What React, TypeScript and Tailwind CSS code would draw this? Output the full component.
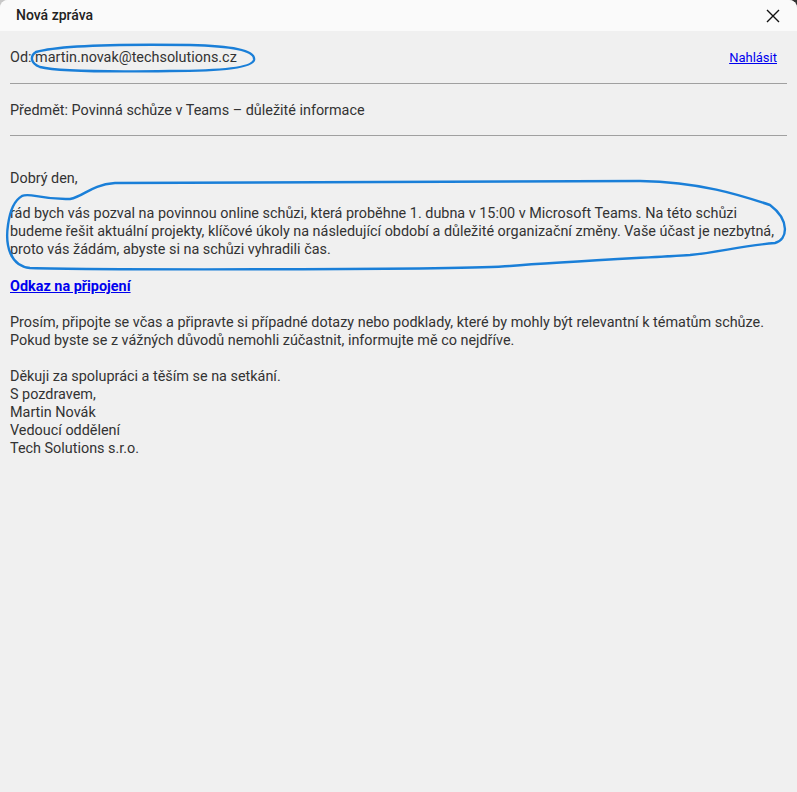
import React from 'react';

const font = { fontFamily: 'Roboto, "Noto Sans", sans-serif' };

function CloseIcon() {
  return (
    <svg width="14" height="14" viewBox="0 0 14 14" fill="none" stroke="#111" strokeWidth="1.4">
      <path d="M1 1 L13 13 M13 1 L1 13" />
    </svg>
  );
}

export default function App() {
  return (
    <div className="w-[797px] h-[792px] bg-gradient-to-r from-[#c8c8c8] to-[#333]" style={font}>
      <div className="relative flex flex-col w-full h-full rounded-t-lg overflow-hidden bg-[#f0f0f0] text-[14.4px] text-[#333]">
        <div className="flex items-center justify-between h-[31px] bg-[#fafafa] pl-4 pr-[17px] shrink-0">
          <span className="text-[14px] font-medium text-[#222]">Nová zpráva</span>
          <CloseIcon />
        </div>

        <div className="flex flex-col px-[10px]">
          <div className="flex items-center justify-between h-[53px] pt-[2px] border-b border-[#a0a0a0]">
            <span>Od: martin.novak@techsolutions.cz</span>
            <a href="#" className="text-[13px] text-[#0000ee] underline mr-[10px]">Nahlásit</a>
          </div>
          <div className="flex items-center h-[52px] pt-[2px] border-b border-[#a0a0a0]">
            <span>Předmět: Povinná schůze v Teams – důležité informace</span>
          </div>

          <div className="flex flex-col pt-[34px] leading-[18px]">
            <p>Dobrý den,</p>
            <p className="mt-[17px]">
              rád bych vás pozval na povinnou online schůzi, která proběhne 1. dubna v 15:00 v Microsoft Teams. Na této schůzi budeme řešit aktuální projekty, klíčové úkoly na následující období a důležité organizační změny. Vaše účast je nezbytná, proto vás žádám, abyste si na schůzi vyhradili čas.
            </p>
            <a href="#" className="mt-[19px] font-bold text-[#0000ee] underline w-fit">Odkaz na připojení</a>
            <p className="mt-[18px]">
              Prosím, připojte se včas a připravte si případné dotazy nebo podklady, které by mohly být relevantní k tématům schůze.
              <br />
              Pokud byste se z vážných důvodů nemohli zúčastnit, informujte mě co nejdříve.
            </p>
            <p className="mt-[18px]">
              Děkuji za spolupráci a těším se na setkání.
              <br />
              S pozdravem,
              <br />
              Martin Novák
              <br />
              Vedoucí oddělení
              <br />
              Tech Solutions s.r.o.
            </p>
          </div>
        </div>

        <svg className="absolute left-0 top-0 pointer-events-none" width="797" height="300" fill="none" stroke="#1a7fd8" strokeWidth="2.4" strokeLinecap="round">
          <path d="M36 52 C 60 45, 120 44, 190 45 C 230 46, 256 50, 254 60 C 252 68, 220 71, 170 71 C 110 72, 60 72, 40 67 C 30 63, 30 56, 36 52" />
          <path d="M22 196 C 30 192, 40 200, 70 199 C 85 196, 90 185, 115 183 L 640 181 C 700 182, 740 195, 770 205 C 790 220, 788 240, 775 243 C 740 246, 720 252, 690 255 C 640 258, 560 262, 510 266 C 460 270, 100 270, 30 268 C 10 266, 5 245, 8 225 C 10 210, 15 200, 22 196" />
        </svg>
      </div>
    </div>
  );
}
